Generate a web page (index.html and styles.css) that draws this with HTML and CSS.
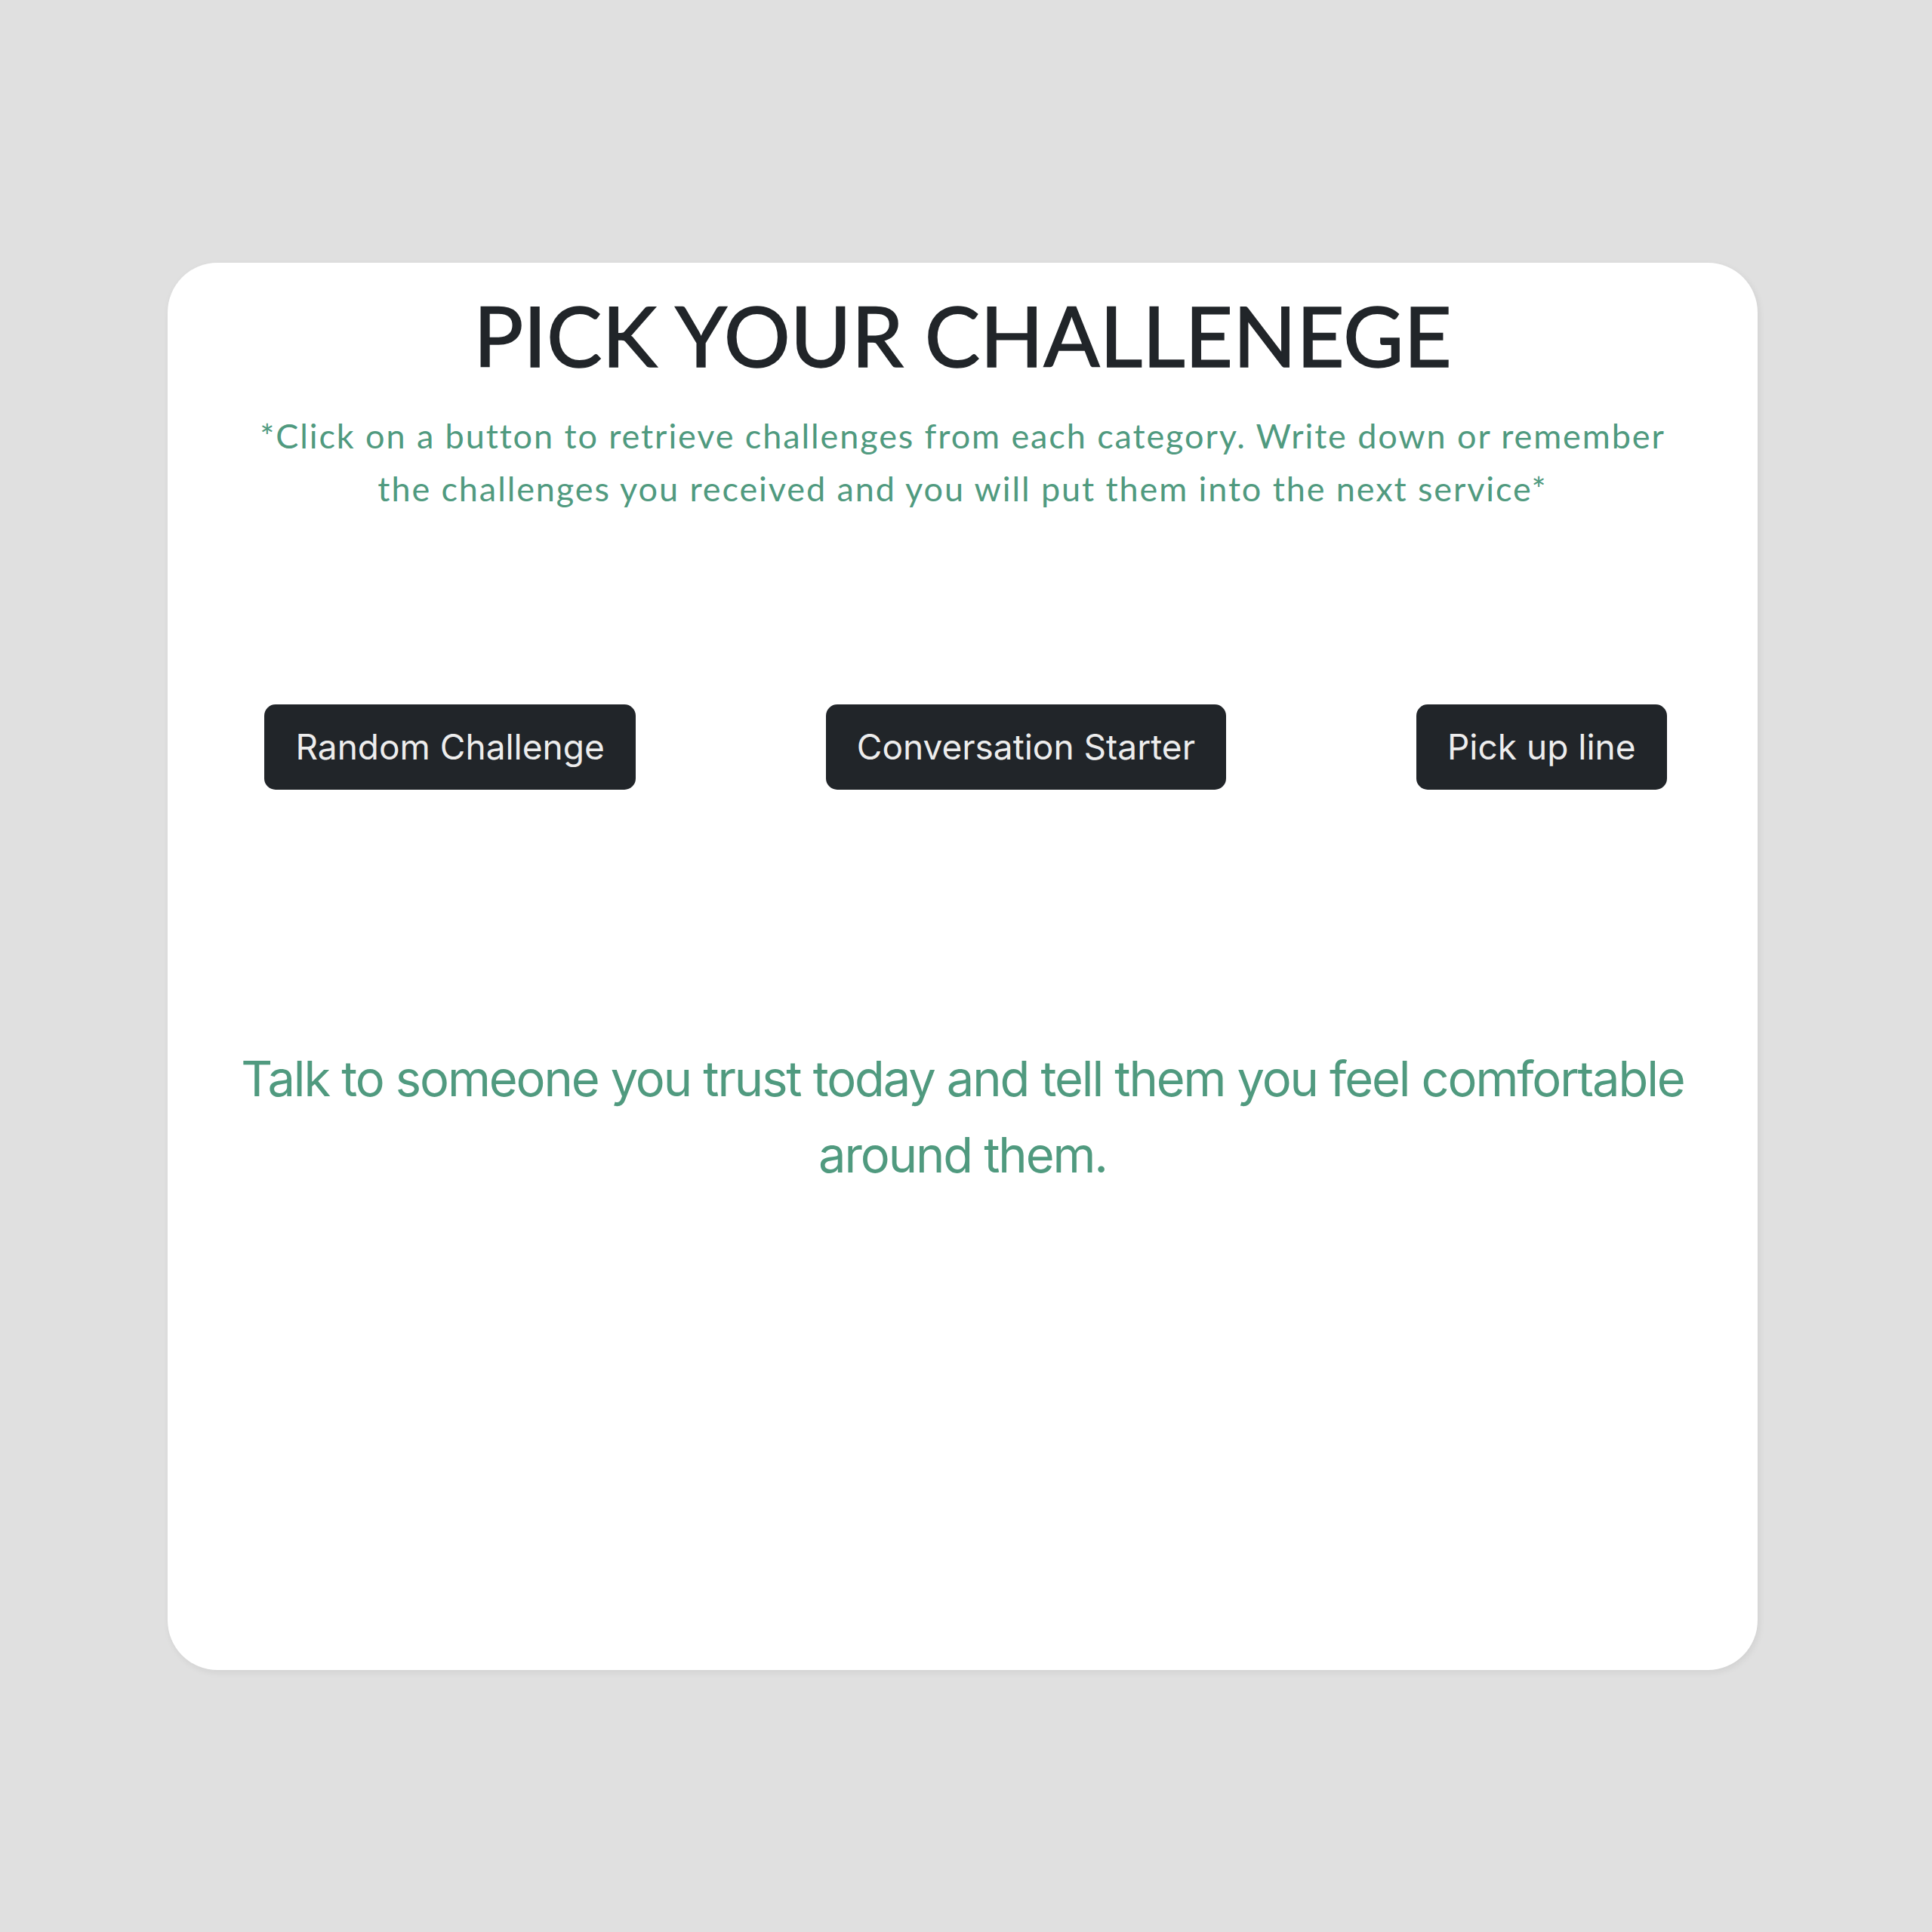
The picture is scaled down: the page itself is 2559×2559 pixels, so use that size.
FILE: index.html
```html
<!DOCTYPE html>
<html lang="en">
<head>
<meta charset="utf-8">
<title>Pick your challenge</title>
<link rel="stylesheet" href="styles.css">
</head>
<body>
<main class="page">
  <section class="card">
    <h1 class="title">PICK YOUR CHALLENEGE</h1>
    <p class="intro">*Click on a button to retrieve challenges from each category. Write down or remember the challenges you received and you will put them into the next service*</p>
    <div class="actions">
      <button class="btn" type="button">Random Challenge</button>
      <button class="btn" type="button">Conversation Starter</button>
      <button class="btn" type="button">Pick up line</button>
    </div>
    <p class="result">Talk to someone you trust today and tell them you feel comfortable around them.</p>
  </section>
</main>
</body>
</html>
```
FILE: styles.css
```css
html, body {
  margin: 0;
  padding: 0;
}
body {
  background: #e0e0e0;
  min-height: 2559px;
}
.page {
  padding: 348px 0 0 222px;
}
.card {
  box-sizing: border-box;
  width: 2106px;
  height: 1864px;
  background: #ffffff;
  border-radius: 66px;
  box-shadow: 2px 3px 10px rgba(0, 0, 0, 0.07);
  padding-top: 29px;
  display: flex;
  flex-direction: column;
  align-items: center;
}
.title {
  margin: 0;
  font-family: Lato, "Noto Sans", sans-serif;
  font-weight: 400;
  font-size: 110px;
  line-height: 132px;
  color: #212529;
  text-align: center;
  -webkit-text-stroke: 1.5px #212529;
}
.intro {
  margin: 33px 0 0;
  width: 1890px;
  font-family: Lato, "Noto Sans", sans-serif;
  font-size: 45px;
  line-height: 70px;
  letter-spacing: 1.9px;
  color: #509a7f;
  text-align: center;
}
.actions {
  margin-top: 251px;
  display: flex;
  gap: 252px;
  padding-left: 8px;
}
.btn {
  font-family: Inter, "Noto Sans", sans-serif;
  font-size: 46px;
  line-height: 55px;
  padding: 29px 41px;
  color: #ededed;
  background: #212529;
  border: none;
  border-radius: 15px;
}
.result {
  margin: 332px 0 0;
  width: 1960px;
  font-family: Inter, "Noto Sans", sans-serif;
  font-size: 65px;
  line-height: 101px;
  letter-spacing: -2.1px;
  color: #509a7f;
  text-align: center;
}
```
